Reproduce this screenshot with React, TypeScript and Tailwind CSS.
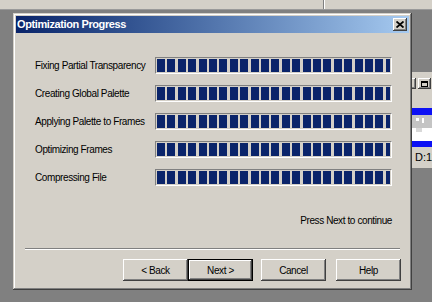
import React from "react";

const raised =
  "shadow-[inset_-1px_-1px_#404040,inset_1px_1px_#ffffff,inset_-2px_-2px_#808080,inset_2px_2px_#d4d0c8]";

function Bar() {
  return (
    <div className="w-[237px] h-[17px] border border-t-[#808080] border-l-[#808080] border-b-white border-r-white p-[1px] bg-[#d4d0c8]">
      <div className="w-full h-full bg-[repeating-linear-gradient(90deg,#0a246a_0px,#0a246a_8px,#d4d0c8_8px,#d4d0c8_10.4px)]" />
    </div>
  );
}

function Btn({ children, def }: { children: React.ReactNode; def?: boolean }) {
  if (def) {
    return (
      <div className="w-[65px] h-[22px] border border-black">
        <div className={`w-full h-full bg-[#d4d0c8] flex items-center justify-center text-[10px] tracking-[-0.4px] text-black ${raised}`}>
          {children}
        </div>
      </div>
    );
  }
  return (
    <div className={`w-[65px] h-[22px] bg-[#d4d0c8] flex items-center justify-center text-[10px] tracking-[-0.4px] text-black ${raised}`}>
      {children}
    </div>
  );
}

export default function App() {
  const labels = [
    "Fixing Partial Transparency",
    "Creating Global Palette",
    "Applying Palette to Frames",
    "Optimizing Frames",
    "Compressing File",
  ];
  return (
    <div className="relative w-[432px] h-[302px] overflow-hidden bg-[#808080] font-['Liberation_Sans','Arial',sans-serif]">
      {/* top strip of the app behind */}
      <div className="absolute left-0 top-0 w-[432px] h-[10px] bg-[#d4d0c8] border-b border-[#9a9a9a] flex">
        <div className="ml-[323px] w-[1px] h-full bg-[#808080]" />
        <div className="w-[1px] h-full bg-white" />
      </div>

      {/* background document window on the right */}
      <div className="absolute left-[400px] top-[72px] w-[60px] h-[96px] bg-[#d4d0c8] flex flex-col">
        <div className="h-[6px]" />
        <div className="flex h-[11px] gap-[2px] pl-[3px]">
          <div className={`w-[13px] h-[11px] bg-[#d4d0c8] ${raised}`} />
          <div className={`w-[13px] h-[11px] bg-[#d4d0c8] flex items-center justify-center ${raised}`}>
            <div className="w-[7px] h-[6px] border border-black border-t-2" />
          </div>
        </div>
        <div className="h-[19px]" />
        <div className="h-[7px] bg-[#0c10f4]" />
        <div className="h-[26px] bg-white flex flex-col">
          <div className="h-[13px] bg-[#c4c4c4] flex gap-[3px] pl-[16px] pt-[3px]">
            <div className="w-[3px] h-[3px] bg-white" />
            <div className="w-[2px] h-[5px] bg-white" />
          </div>
          <div className="h-[4px] flex pl-[16px]">
            <div className="w-[6px] h-[4px] bg-[#d8d8d8]" />
          </div>
        </div>
        <div className="h-[6px] bg-[#0c10f4]" />
        <div className="flex-1 flex items-center pl-[15px] text-[11px] text-black leading-none">D:11</div>
      </div>

      {/* dialog */}
      <div className="absolute left-[13px] top-[13px] w-[399px] h-[277px] bg-[#d4d0c8] p-[3px] shadow-[inset_-1px_-1px_#404040,inset_1px_1px_#d4d0c8,inset_-2px_-2px_#808080,inset_2px_2px_#ffffff] flex flex-col">
        {/* title bar */}
        <div className="h-[17px] flex items-center justify-between pl-[1px] pr-[2px] bg-gradient-to-r from-[#0a246a] to-[#a6caf0]">
          <span className="text-white font-bold text-[11px] tracking-[-0.4px] leading-none">Optimization Progress</span>
          <div className={`w-[14px] h-[13px] bg-[#d4d0c8] flex items-center justify-center ${raised}`}>
            <svg width="8" height="7" viewBox="0 0 8 7">
              <path d="M0.5 0.5 L7.5 6.5 M7.5 0.5 L0.5 6.5" stroke="#000" strokeWidth="1.8" />
            </svg>
          </div>
        </div>

        {/* rows */}
        <div className="flex flex-col gap-[11px] pt-[24px] pl-[19px]">
          {labels.map((l) => (
            <div key={l} className="flex items-center h-[17px]">
              <div className="w-[120px] text-[10px] tracking-[-0.4px] text-black leading-none">{l}</div>
              <Bar />
            </div>
          ))}
        </div>

        <div className="mt-[29px] h-[12px] flex items-center justify-end pr-[17px] text-[10px] tracking-[-0.4px] text-black leading-none">
          Press Next to continue
        </div>

        <div className="mt-[21px] mx-[9px] h-[2px] border-t border-t-[#808080] border-b border-b-white" />

        <div className="mt-[9px] flex justify-end pr-[8px]">
          <Btn>&lt; Back</Btn>
          <Btn def>Next &gt;</Btn>
          <div className="w-[8px]" />
          <Btn>Cancel</Btn>
          <div className="w-[10px]" />
          <Btn>Help</Btn>
        </div>
      </div>
    </div>
  );
}
